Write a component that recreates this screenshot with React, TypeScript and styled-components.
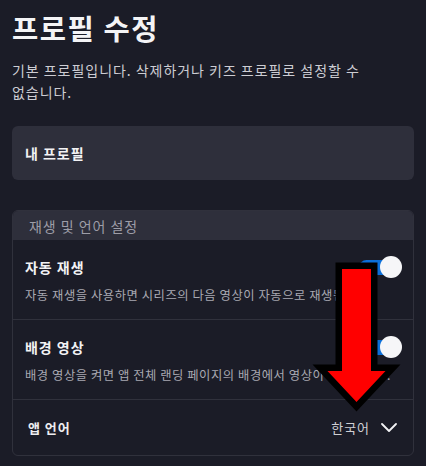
import React from "react";
import styled, { createGlobalStyle } from "styled-components";

const GlobalStyle = createGlobalStyle`
  html, body {
    margin: 0;
    padding: 0;
    background: #1b1c27;
  }
  body {
    font-family: "Noto Sans CJK KR", "Noto Sans", sans-serif;
    color: #f2f2f4;
    letter-spacing: 0.06em;
    word-break: keep-all;
  }
  * { box-sizing: border-box; }
`;

const Page = styled.div`
  position: relative;
  min-height: 466px;
  padding: 10px 12px 0 12px;
  display: flex;
  flex-direction: column;
`;

const Title = styled.h1`
  margin: 0;
  font-size: 28.5px;
  line-height: 36px;
  font-weight: 700;
  letter-spacing: 0.055em;
  color: #f4f4f6;
`;

const Lead = styled.p`
  margin: 13px 0 0 0;
  font-size: 14px;
  line-height: 22px;
  color: #cdcdd3;
  word-break: keep-all;
`;

const ProfileCard = styled.div`
  margin-top: 23px;
  height: 54px;
  border-radius: 6px;
  background: #2e2f3b;
  padding: 0 13px;
  display: flex;
  align-items: center;
  font-size: 14px;
  font-weight: 700;
  color: #f2f2f4;
`;

const SettingsCard = styled.section`
  margin-top: 30px;
  border: 1px solid #30313c;
  border-radius: 6px;
  overflow: hidden;
`;

const CardHeader = styled.div`
  margin: -1px -1px 0 -1px;
  height: 30px;
  padding: 1px 17px 0 17px;
  background: #2e2f3b;
  display: flex;
  align-items: center;
  font-size: 14px;
  color: #9d9da7;
`;

const ToggleRow = styled.div`
  padding: 17px 11px 15px 12px;
  border-bottom: 1px solid #30313c;
  display: flex;
  flex-direction: column;
  gap: 9px;
`;

const RowHead = styled.div`
  display: flex;
  justify-content: space-between;
  align-items: center;
  height: 20px;
`;

const RowTitle = styled.div`
  font-size: 14px;
  line-height: 20px;
  font-weight: 700;
  color: #f2f2f4;
`;

const RowDesc = styled.div`
  font-size: 12.3px;
  line-height: 18px;
  letter-spacing: 0.045em;
  color: #a9a9b2;
  white-space: nowrap;
`;

const SwitchBox = styled.div`
  position: relative;
  width: 43px;
  height: 22px;
  margin: -1px 0;
  flex: none;
`;

const SwitchTrack = styled.span<{ $on: boolean }>`
  position: absolute;
  left: 0;
  top: 3.5px;
  width: 38px;
  height: 15px;
  border-radius: 8px;
  background: ${(p) => (p.$on ? "#0c6fd8" : "#55565f")};
`;

const SwitchKnob = styled.span<{ $on: boolean }>`
  position: absolute;
  top: 0;
  ${(p) => (p.$on ? "right: 0;" : "left: 0;")}
  width: 22px;
  height: 22px;
  border-radius: 50%;
  background: #f6f6f8;
`;

const SelectRow = styled.div`
  height: 55px;
  padding: 0 16px 0 15px;
  display: flex;
  align-items: center;
  justify-content: space-between;
`;

const SelectLabel = styled.div`
  font-size: 13px;
  font-weight: 600;
  color: #ededf0;
`;

const SelectValue = styled.div`
  display: flex;
  align-items: center;
  gap: 11px;
  font-size: 13px;
  color: #cfcfd4;
`;

const Annotation = styled.svg`
  position: absolute;
  left: 0;
  top: 0;
  width: 426px;
  height: 466px;
  pointer-events: none;
`;

const Switch: React.FC<{ on: boolean }> = ({ on }) => (
  <SwitchBox>
    <SwitchTrack $on={on} />
    <SwitchKnob $on={on} />
  </SwitchBox>
);

const settings = [
  {
    title: "자동 재생",
    desc: "자동 재생을 사용하면 시리즈의 다음 영상이 자동으로 재생됩니다.",
  },
  {
    title: "배경 영상",
    desc: "배경 영상을 켜면 앱 전체 랜딩 페이지의 배경에서 영상이 재생됩니다.",
  },
];

export default function App() {
  return (
    <>
      <GlobalStyle />
      <Page>
        <Title>프로필 수정</Title>
        <Lead>기본 프로필입니다. 삭제하거나 키즈 프로필로 설정할 수 없습니다.</Lead>
        <ProfileCard>내 프로필</ProfileCard>
        <SettingsCard>
          <CardHeader>재생 및 언어 설정</CardHeader>
          {settings.map((s) => (
            <ToggleRow key={s.title}>
              <RowHead>
                <RowTitle>{s.title}</RowTitle>
                <Switch on />
              </RowHead>
              <RowDesc>{s.desc}</RowDesc>
            </ToggleRow>
          ))}
          <SelectRow>
            <SelectLabel>앱 언어</SelectLabel>
            <SelectValue>
              한국어
              <svg width="16" height="9" viewBox="0 0 16 9" fill="none">
                <path
                  d="M1 1 L8 8 L15 1"
                  stroke="#f2f2f4"
                  strokeWidth="1.8"
                  strokeLinecap="round"
                  strokeLinejoin="round"
                />
              </svg>
            </SelectValue>
          </SelectRow>
        </SettingsCard>
        <Annotation viewBox="0 0 426 466">
          <polygon
            points="342,269 371,269 371,371 385.5,371 356.5,402 327.5,371 342,371"
            fill="#ff0000"
            stroke="#000000"
            strokeWidth="13"
            strokeLinejoin="miter"
            strokeMiterlimit="10"
            paintOrder="stroke"
          />
        </Annotation>
      </Page>
    </>
  );
}
